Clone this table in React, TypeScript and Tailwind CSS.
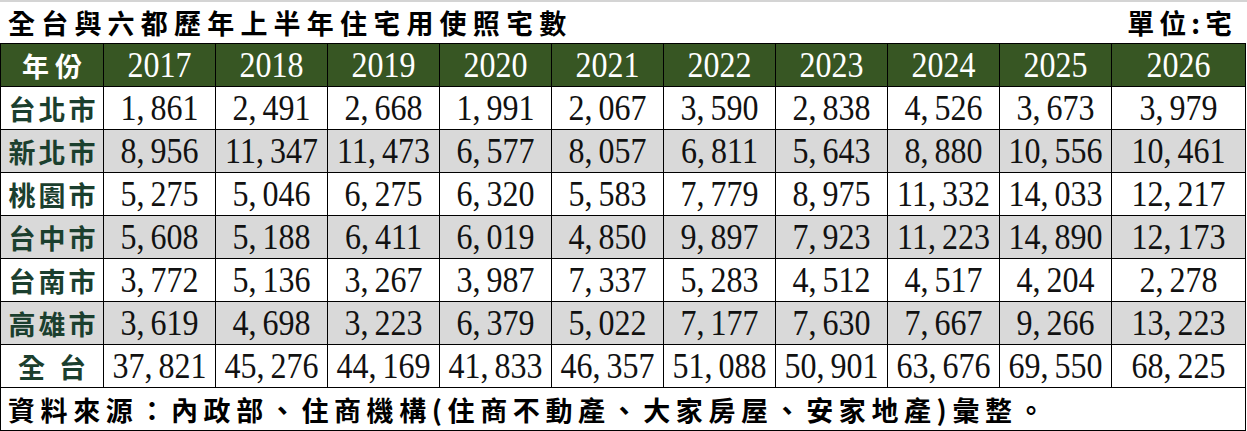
import React from "react";

const years = ["2017", "2018", "2019", "2020", "2021", "2022", "2023", "2024", "2025", "2026"];

const rows: { name: string; values: string[]; shaded?: boolean; total?: boolean }[] = [
  { name: "台北市", values: ["1,861", "2,491", "2,668", "1,991", "2,067", "3,590", "2,838", "4,526", "3,673", "3,979"] },
  { name: "新北市", values: ["8,956", "11,347", "11,473", "6,577", "8,057", "6,811", "5,643", "8,880", "10,556", "10,461"], shaded: true },
  { name: "桃園市", values: ["5,275", "5,046", "6,275", "6,320", "5,583", "7,779", "8,975", "11,332", "14,033", "12,217"] },
  { name: "台中市", values: ["5,608", "5,188", "6,411", "6,019", "4,850", "9,897", "7,923", "11,223", "14,890", "12,173"], shaded: true },
  { name: "台南市", values: ["3,772", "5,136", "3,267", "3,987", "7,337", "5,283", "4,512", "4,517", "4,204", "2,278"] },
  { name: "高雄市", values: ["3,619", "4,698", "3,223", "6,379", "5,022", "7,177", "7,630", "7,667", "9,266", "13,223"], shaded: true },
  { name: "全台", values: ["37,821", "45,276", "44,169", "41,833", "46,357", "51,088", "50,901", "63,676", "69,550", "68,225"], total: true },
];

const cjk = "font-['Noto_Sans_CJK_TC','Noto_Sans_CJK_SC',sans-serif]";
const num = "font-['Liberation_Serif',serif]";

// MingLiU-style comma: the glyph sits in a wider cell
function Num({ value }: { value: string }) {
  const parts = value.split(",");
  return (
    <span className="inline-block scale-y-110">
      {parts.map((p, i) => (
        <React.Fragment key={i}>
          {p}
          {i < parts.length - 1 && <span className="mr-[6px]">,</span>}
        </React.Fragment>
      ))}
    </span>
  );
}

export default function App() {
  return (
    <div className="w-[1247px] h-[431px] bg-white overflow-hidden">
      <div className="flex items-center justify-between h-[43px] border-t-2 border-[#d4d4d4] pl-[8px] pr-[10px]">
        <h1 className={`${cjk} text-[27px] font-bold tracking-[6.2px] text-black leading-none`}>
          全台與六都歷年上半年住宅用使照宅數
        </h1>
        <span className={`${cjk} text-[27px] font-bold tracking-[5px] text-black leading-none`}>
          單位:宅
        </span>
      </div>

      <table className="w-[1246px] border-collapse table-fixed">
        <colgroup>
          <col className="w-[103px]" />
          {years.slice(0, 9).map((y) => (
            <col key={y} className="w-[112px]" />
          ))}
          <col />
        </colgroup>
        <thead>
          <tr className="h-[43px] bg-[#375623] text-white">
            <th className={`${cjk} border border-black text-[27px] font-bold tracking-[6px] pl-[6px] leading-none`}>
              年份
            </th>
            {years.map((y) => (
              <th key={y} className={`${num} border border-black text-[32px] font-normal leading-none`}>
                <span className="inline-block scale-y-110">{y}</span>
              </th>
            ))}
          </tr>
        </thead>
        <tbody>
          {rows.map((r) => (
            <tr key={r.name} className={`h-[43px] ${r.shaded ? "bg-[#d9d9d9]" : "bg-white"}`}>
              <td
                className={`${cjk} border border-black text-[27px] font-bold text-[#1b3f2e] leading-none text-center ${
                  r.total ? "tracking-[14px] pl-[14px]" : "tracking-[3px] pl-[3px]"
                }`}
              >
                {r.name}
              </td>
              {r.values.map((v, i) => (
                <td key={i} className={`${num} border border-black text-[32px] text-[#111] leading-none text-center`}>
                  <Num value={v} />
                </td>
              ))}
            </tr>
          ))}
          <tr className="h-[43px]">
            <td colSpan={11} className={`${cjk} border border-black text-[27px] font-bold tracking-[5.6px] text-black leading-none pl-[7px]`}>
              資料來源：內政部、住商機構(住商不動產、大家房屋、安家地產)彙整。
            </td>
          </tr>
        </tbody>
      </table>
    </div>
  );
}
